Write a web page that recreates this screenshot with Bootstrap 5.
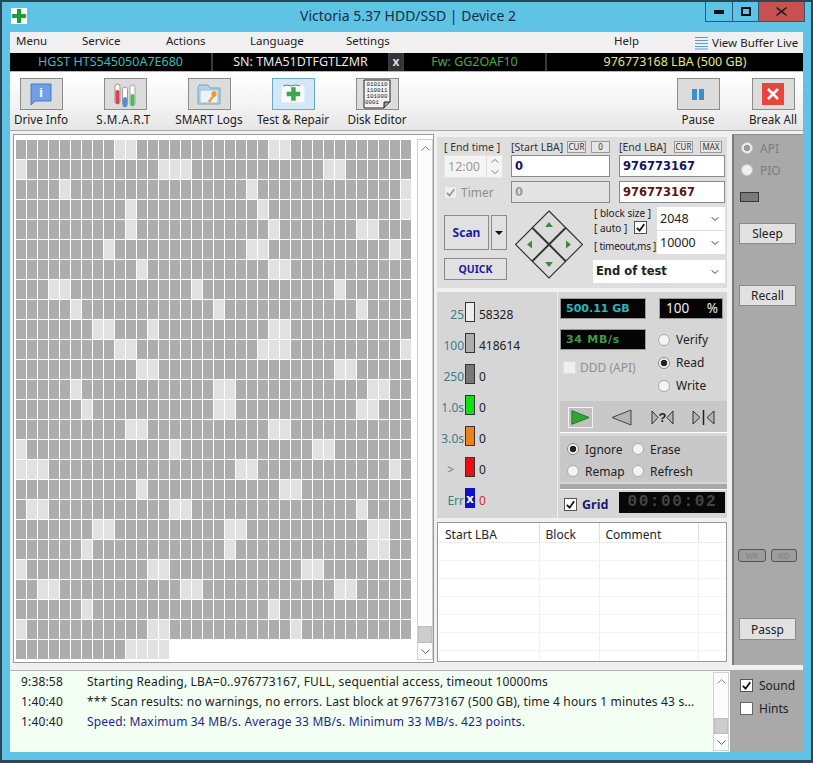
<!doctype html>
<html lang="en">
<head>
<meta charset="utf-8">
<title>Victoria 5.37 HDD/SSD | Device 2</title>
<link href="https://cdn.jsdelivr.net/npm/bootstrap@5.3.0/dist/css/bootstrap.min.css" rel="stylesheet">
<style>
html,body{margin:0;background:#2b4757;}
body{width:813px;height:763px;overflow:hidden;font-family:"Noto Sans",sans-serif;font-size:12px;line-height:15px;color:#222;}
.vw{width:813px;height:763px;background:#5fc3e6;border:2px solid #2b4757;border-bottom-width:3px;}
.vtitle{height:30px;}
.vappicon{width:16px;height:16px;margin:6px 0 0 9px;background:#fff;flex:none;}
.vtitletext{font-size:14px;line-height:28px;text-align:center;color:#14303f;padding-left:84px;}
.vctl{width:100px;height:20px;margin-right:6px;flex:none;}
.vctl>div{border:1px solid #2d5a70;border-top:0;height:20px;display:flex;align-items:center;justify-content:center;}
.vctl .c1{width:28px;}.vctl .c2{width:26px;border-left:0;}.vctl .c3{width:46px;border-left:0;background:#c75050;}
.vbody{margin:0 8px;}
.vmenu{height:21px;background:#f0f0f0;display:grid;grid-template-columns:66px 84px 84px 96px 268px 81px auto;padding-left:6px;line-height:18px;font-size:11.5px;}
.vmenu span{white-space:nowrap;}
.vinfo{height:18px;background:#3a3a3a;display:grid;grid-template-columns:201px 175px 12px 141px 256px;column-gap:2px;line-height:18px;text-align:center;font-size:12.5px;}
.vinfo>div{background:#000;white-space:nowrap;}
.vinfo .vx{background:#333;color:#ddd;font-weight:700;font-size:12px;}
.vtools{height:59px;border-top:1px solid #b8b8b8;background:linear-gradient(#fff,#f5f5f5 50%,#e6e6e6);padding-top:6px;font-size:11.7px;}
.vtool{width:84px;text-align:center;flex:none;white-space:nowrap;}
.vtool:first-child{margin-left:-11px;}
.vtool.w1{width:74px;}.vtool.w2{width:60px;margin-left:8px;}
.vtbtn{width:43px;height:32px;margin:0 auto 2px;background:#dcdcdc;border:1px solid #8c8c8c;display:flex;align-items:center;justify-content:center;}
.vtbtn.on{background:#d3e8f6;border-color:#6aa6cf;}
.vspaced{letter-spacing:.5px;margin-left:-3px;}
.vmain{height:535px;border-top:1px solid #a8a8a8;background:#f0f0f0;padding:3px 0 0 3px;}
.vgridpane{width:421px;height:529px;border:1px solid #999;background:#fff;padding:5px 0 0 2px;flex:none;}
.vcells{display:grid;grid-template-columns:repeat(36,10px);grid-auto-rows:19px;gap:1px;width:401px;align-content:start;}
.vcells i{display:block;background:#adadad;}
.vcells i.l{background:#e1e1e1;}
.vscroll{width:16px;border:1px solid #d0d0d0;background:#fcfcfc;flex:none;}
.vscroll .a{height:16px;display:flex;align-items:center;justify-content:center;flex:none;}
.vscroll .t{background:#cdcdcd;border:1px solid #bdbdbd;flex:none;}
.vsc1{height:521px;margin:-1px 0 0 5px;}
.vsc1 .t{height:17px;}
.vcenter{width:290px;margin-left:3px;flex:none;gap:4px;}
.vtop{height:154px;background:#dedede;border-top:3px solid #f0f0f0;padding:4px 2px 0 7px;font-size:11px;}
.vtopgrid{display:grid;grid-template-columns:59px 100px 106px;column-gap:8px;row-gap:2px;grid-template-rows:12px 24px 22px;}
.vm2{width:99px;}
.vlbl{font-size:10.5px;line-height:13px;white-space:nowrap;color:#333;}
.vmini{border:1px solid #999;font-size:8px;line-height:10px;height:12px;width:19px;text-align:center;color:#333;background:#e6e6e6;}
.vmini.m0{margin-left:5px;}
.vmini.m1{width:22px;margin:0 3px 0 7px;}
.vspacer{flex:1;}
.form-control.vfield{height:22px;padding:0 3px;border:1px solid #8a8a8a;border-radius:0;font-size:11.5px;line-height:20px;font-weight:700;color:#14145a;background:#fff;font-family:"DejaVu Sans",sans-serif;}
.form-control.vfield.vm2{width:99px;}
.form-control.vfield.dis{background:#e4e4e4;color:#9a9a9a;}
.form-control.vfield.red{color:#5a1414;}
.vtime{height:23px;width:59px;background:#f4f4f4;border:1px solid #e4e4e4;display:flex;color:#9a9a9a;font-size:12.5px;line-height:21px;padding-left:3px;}
.vspin{width:16px;margin-left:auto;border-left:1px solid #ddd;display:flex;flex-direction:column;align-items:center;justify-content:space-around;}
.vdim{color:#8f8f8f;}
.vtimer{font-size:12px;height:22px;}
.vbtn.btn{padding:0;border-radius:0;background:#e1e1e1;border:1px solid #8a8a8a;color:#222;font-size:12px;line-height:15px;display:flex;align-items:center;justify-content:center;}
.vscan.btn{width:45px;height:35px;color:#1c1ca0;font-weight:700;}
.vscandrop.btn{width:16px;height:35px;margin-left:2px;}
.vquick.btn{width:63px;height:22px;color:#1c1ca0;font-weight:700;font-size:10.5px;margin-top:8px;}
.vrow3{margin-top:3px;}
.vcol1{width:63px;padding-top:9px;flex:none;}
.vdiamond{width:68px;height:70px;margin:4px 0 0 8px;flex:none;display:block;}
.vcol3{width:132px;margin-left:10px;flex:none;margin-top:1px;}
.vlabels{width:64px;flex:none;font-size:10px;padding-left:1px;}
.vlabels div{white-space:nowrap;line-height:12px;}
.vautorow{height:15px;margin-top:1px;}
.vtoms{margin-top:5px;letter-spacing:-.25px;}
.form-select.vsel{height:23px;width:68px;padding:0 0 0 3px;border:0;border-radius:0;font-size:12.5px;line-height:23px;background-color:#fff;background-size:10px 8px;background-position:right 5px center;color:#222;}
.form-select.vsel.big{width:132px;height:23px;font-weight:700;margin-top:6px;font-family:"DejaVu Sans",sans-serif;font-size:11.5px;}
.form-select.vsel+.form-select.vsel{margin-top:1px;}
.vmid{height:226px;background:#d6d6d6;}
.vstats{width:121px;flex:none;border-right:1px solid #eee;padding-top:10px;gap:11px;}
.vstat{height:20px;display:flex;align-items:flex-end;}
.vstat b{font-weight:400;width:27px;text-align:right;color:#3c7f86;white-space:nowrap;margin-right:1px;}
.vstat b.gt{color:#777;padding-right:10px;}
.vstat u{display:block;width:10px;height:20px;border:1px solid #333;flex:none;margin-right:4px;text-decoration:none;}
.vctrl{width:169px;flex:none;padding-top:6px;padding-left:2px;}
.vlcd{background:#050505;border:1px solid #9a9a9a;font-weight:700;white-space:nowrap;font-family:"DejaVu Sans",sans-serif;}
.vlcd1{width:86px;height:21px;line-height:19px;padding-left:5px;color:#2fb6bb;font-size:11px;}
.vlcd2{width:64px;height:21px;line-height:19px;color:#eee;font-size:13.5px;font-weight:400;font-family:"Noto Sans",sans-serif;margin-left:13px;padding-left:6px;}
.vlcd3{width:86px;height:21px;line-height:19px;padding-left:5px;color:#3f9a45;font-size:11px;letter-spacing:.7px;margin-top:10px;}
.vddd{margin-top:10px;padding-left:3px;height:14px;}
.vopts{width:70px;margin-left:12px;padding-top:9px;}
.vopt{height:23px;display:flex;align-items:center;gap:6px;white-space:nowrap;}
.form-check-input.vrad,.form-check-input.vchk{margin:0;width:13px;height:13px;flex:none;opacity:1;float:none;}
.form-check-input.vrad{width:12px;height:12px;background-color:#f4f4f4;border:1px solid #aaa;}
.form-check-input.vrad:checked{background-color:#f4f4f4;border-color:#888;background-image:radial-gradient(circle,#222 0,#222 3px,transparent 3.6px);}
.form-check-input.vchk{border-radius:0;background-color:#fff;border:1px solid #666;}
.form-check-input.vchk:checked{background-color:#fff;border-color:#555;background-size:11px;background-position:center;background-repeat:no-repeat;background-image:url("data:image/svg+xml,%3Csvg xmlns='http://www.w3.org/2000/svg' viewBox='0 0 12 12'%3E%3Cpath d='M2 6.5 5 9.5 10 2.5' fill='none' stroke='%23111' stroke-width='2'/%3E%3C/svg%3E");}
.form-check-input.vchk.soft,.form-check-input.vchk.soft:checked{border-color:#ddd;background-color:#efefef;}
.form-check-input.vchk:disabled:checked{background-image:url("data:image/svg+xml,%3Csvg xmlns='http://www.w3.org/2000/svg' viewBox='0 0 12 12'%3E%3Cpath d='M2 6.5 5 9.5 10 2.5' fill='none' stroke='%23999' stroke-width='2'/%3E%3C/svg%3E");}
.form-check-input.vchk.vchkauto{margin-right:10px;}
.vplayer{height:32px;background:#c8c8c8;border-bottom:1px solid #fff;margin-top:4px;padding:6px 0 0 8px;gap:16px;}
.vpb{width:25px;height:21px;display:block;flex:none;}
.vplayer .vpb:first-child{background:#c0c0c0;border:1px solid #f4f4f4;}
.vdo{height:46px;background:#c8c8c8;margin-top:3px;padding:2px 0 0 7px;display:grid;grid-template-columns:65px 80px;grid-auto-rows:22px;}
.vdo .vopt{height:22px;}
.vthin{height:5px;background:#a9a9a9;margin-top:2px;}
.vgridrow{height:24px;border-top:1px solid #fff;padding:2px 0 0 4px;display:flex;align-items:flex-start;}
.vgridrow .form-check-input.vchk{margin-top:6px;}
.vgridlbl{font-weight:700;color:#1a1a70;font-size:12.5px;margin:5px 0 0 5px;line-height:15px;}
.vclock{width:106px;height:21px;margin-left:11px;background:#080808;color:#454545;font-family:"Liberation Mono",monospace;font-weight:700;font-size:16px;line-height:21px;text-align:center;letter-spacing:1.6px;}
.vtablewrap{height:140px;border:1px solid #999;background:#fff;overflow:hidden;}
.table.vtab{table-layout:fixed;width:289px;margin:0;font-size:12px;line-height:14px;--bs-table-bg:transparent;}
.table.vtab th{font-weight:400;height:19px;padding:1px 0 0 6px;border-bottom:1px solid #ececec;border-right:1px solid #e0e0e0;white-space:nowrap;}
.table.vtab th:first-child{padding-left:7px;}
.table.vtab td{height:18px;padding:0;border-bottom:1px solid #f2f2f2;border-right:1px solid #f0f0f0;}
.vside{width:71px;height:531px;background:#a9a9a9;border-left:2px solid #7c7c7c;border-top:1px solid #8e8e8e;margin-left:5px;padding:2px 0 0 5px;flex:none;color:#7d7d7d;}
.vside .vopt{height:22px;margin-left:2px;gap:7px;}
.form-check-input.vrad.off{background-color:#f0f0f0;border-color:#c4c4c4;}
.form-check-input.vrad.off:checked{background-image:radial-gradient(circle,#9a9a9a 0,#9a9a9a 3px,transparent 3.6px);}
.vled{width:19px;height:10px;border:1px solid #333;background:#7a7a7a;margin:11px 0 0 1px;}
.vsbtn.btn{width:57px;height:21px;}
.vsbtn.b1{margin-top:21px;}.vsbtn.b2{margin-top:41px;}.vsbtn.b3{margin-top:56px;height:22px;}
.vwr{margin-top:243px;height:13px;margin-left:-1px;gap:5px;}
.vwr>div{border:1px solid #555;background:#9c9c9c;border-radius:3px;color:#8a8a8a;font-size:8px;line-height:11px;text-align:center;font-weight:700;}
.vwr>div:first-child{width:28px;}.vwr>div:last-child{width:26px;}
.vbottom{height:87px;background:#f0f0f0;padding-top:5px;}
.vlog{width:720px;height:82px;background:#f3fff3;border-top:1px solid #b0b0b0;flex:none;}
.vlogtext{flex:1;min-width:0;padding:1px 0 0 11px;font-size:12px;letter-spacing:.17px;}
.vlogrow{display:flex;height:20px;line-height:20px;white-space:nowrap;}
.vlogrow b{font-weight:400;width:66px;flex:none;}
.vblue{color:#1f1f8f;}
.vsc2{height:79px;margin:1px 1px 0 0;}
.vsc2 .t{height:16px;}
.vsnd{width:73px;height:82px;background:#a9a9a9;padding:4px 0 0 10px;color:#222;flex:none;}
.vsnd .vopt{height:23px;gap:6px;}
</style>
</head>
<body>
<div class="vw d-flex flex-column">
  <div class="vtitle d-flex">
    <div class="vappicon d-flex align-items-center justify-content-center">
      <svg width="14" height="14" viewBox="0 0 14 14"><path d="M5 0h4v5h5v4H9v5H5V9H0V5h5z" fill="#1f9d2e"/></svg>
    </div>
    <div class="vtitletext flex-fill">Victoria 5.37 HDD/SSD | Device 2</div>
    <div class="vctl d-flex">
      <div class="c1"><svg width="10" height="4"><rect width="10" height="4" fill="#111"/></svg></div>
      <div class="c2"><svg width="10" height="9"><rect x="1" y="1" width="8" height="7" fill="none" stroke="#111" stroke-width="2"/></svg></div>
      <div class="c3"><svg width="11" height="9" viewBox="0 0 11 9"><path d="M1 0l4.500 3.500L10 0l1 1-4 3.500L11 8l-1 1-4.500-3.500L1 9 0 8l4-3.500L0 1z" fill="#222"/></svg></div>
    </div>
  </div>

  <div class="vbody">
    <div class="vmenu">
      <span>Menu</span><span>Service</span><span>Actions</span><span>Language</span><span>Settings</span><span>Help</span>
      <span class="d-flex align-items-center gap-1"><svg width="13" height="14" viewBox="0 0 13 14"><path d="M0 1.500h13M0 4.500h13M0 7.500h13M0 10.500h13M0 13h13" stroke="#5e9ad6" stroke-width="1.200"/></svg>View Buffer Live</span>
    </div>
    <div class="vinfo">
      <div style="color:#3fb8be">HGST HTS545050A7E680</div>
      <div style="color:#e8e8e8">SN: TMA51DTFGTLZMR</div>
      <div class="vx">x</div>
      <div style="color:#45ad45">Fw: GG2OAF10</div>
      <div style="color:#e4e48a">976773168 LBA (500 GB)</div>
    </div>
    <div class="vtools d-flex">
      <div class="vtool"><div class="vtbtn"><svg width="24" height="24" viewBox="0 0 24 24"><path d="M2 2h20v17H6l-4 4z" fill="#6f9fe6" stroke="#4d78bd"/><text x="12" y="15" font-size="13" font-weight="700" text-anchor="middle" fill="#fff" font-family="Liberation Sans,sans-serif">i</text></svg></div>Drive Info</div>
      <div class="vtool"><div class="vtbtn"><svg width="26" height="27" viewBox="0 0 26 27"><rect x="3" y="3" width="5" height="20" rx="2.500" fill="#fff" stroke="#a88"/><rect x="3.500" y="9" width="4" height="14" rx="2" fill="#d9434a"/><rect x="10.500" y="6" width="5" height="20" rx="2.500" fill="#fff" stroke="#99a"/><rect x="11" y="16" width="4" height="10" rx="2" fill="#4a8fd6"/><rect x="18" y="4" width="5" height="21" rx="2.500" fill="#fff" stroke="#9a9"/><rect x="18.500" y="13" width="4" height="12" rx="2" fill="#54b95a"/></svg></div><span class="vspaced">S.M.A.R.T</span></div>
      <div class="vtool"><div class="vtbtn"><svg width="26" height="24" viewBox="0 0 26 24"><path d="M2 6l1-3h9l2 3h10v16H2z" fill="#b6d3e3" stroke="#7fa3b8"/><rect x="4" y="8" width="18" height="13" fill="#e9f3f8" stroke="#9fc0d2"/><path d="M18 9a3 3 0 0 1 2 5l-3 2-3 5-2-2 4-5a3 3 0 0 1 2-5z" fill="#ee9b2d"/></svg></div>SMART Logs</div>
      <div class="vtool"><div class="vtbtn on"><svg width="30" height="24" viewBox="0 0 30 24"><path d="M3 3h24v18H3z" fill="#f7fbfd" stroke="#d7e4ec"/><path d="M5 4l4-1 4 1 5-1 4 1" fill="none" stroke="#777"/><path d="M13 7h5v5h5v5h-5v5h-5v-5H8v-5h5z" transform="translate(1.500 -1) scale(.9 .9)" fill="#3ba84a"/></svg></div>Test &amp; Repair</div>
      <div class="vtool"><div class="vtbtn"><svg width="30" height="30" viewBox="0 0 30 30"><path d="M2 1h26v22l-6 6H2z" fill="#f2f2f2" stroke="#222"/><path d="M22 29l0-6 6 0" fill="#999" stroke="#222"/><text x="15" y="7" font-size="5.800" text-anchor="middle" fill="#222" font-family="Liberation Mono,monospace">010110</text><text x="15" y="13" font-size="5.800" text-anchor="middle" fill="#222" font-family="Liberation Mono,monospace">110011</text><text x="15" y="19" font-size="5.800" text-anchor="middle" fill="#222" font-family="Liberation Mono,monospace">101000</text><text x="10" y="25" font-size="5.800" text-anchor="middle" fill="#222" font-family="Liberation Mono,monospace">0001</text></svg></div>Disk Editor</div>
      <div class="vtool w1 ms-auto"><div class="vtbtn"><svg width="12" height="11"><rect width="5" height="11" fill="#3a8fd0"/><rect x="7" width="5" height="11" fill="#3a8fd0"/></svg></div>Pause</div>
      <div class="vtool w2"><div class="vtbtn"><svg width="22" height="22" viewBox="0 0 22 22"><rect width="22" height="22" fill="#e8453c"/><path d="M6 6l10 10M16 6L6 16" stroke="#fff" stroke-width="2.500"/></svg></div>Break All</div>
    </div>

    <div class="vmain d-flex">
      <div class="vgridpane d-flex">
        <div class="vcells" id="vcells"></div>
        <div class="vscroll vsc1 d-flex flex-column">
          <div class="a"><svg width="9" height="5"><path d="M.5 4.500l4-4 4 4" fill="none" stroke="#888"/></svg></div>
          <div class="vspacer"></div>
          <div class="t"></div>
          <div class="a"><svg width="9" height="5"><path d="M.5.5l4 4 4-4" fill="none" stroke="#666"/></svg></div>
        </div>
      </div>

      <div class="vcenter d-flex flex-column">
        <div class="vtop">
          <div class="vtopgrid">
            <div class="vlbl">[ End time ]</div>
            <div class="d-flex align-items-center vm2"><span class="vlbl">[Start LBA]</span><span class="vmini ms-auto">CUR</span><span class="vmini m0">0</span></div>
            <div class="d-flex align-items-center"><span class="vlbl">[End LBA]</span><span class="vmini ms-auto">CUR</span><span class="vmini m1">MAX</span></div>
            <div class="vtime">12:00<div class="vspin"><svg width="8" height="4"><path d="M.5 3.500L4 .5l3.500 3" fill="none" stroke="#888"/></svg><svg width="8" height="4"><path d="M.5.5L4 3.500 7.500.5" fill="none" stroke="#888"/></svg></div></div>
            <div class="form-control vfield vm2">0</div>
            <div class="form-control vfield">976773167</div>
            <div class="d-flex align-items-center gap-1 vdim vtimer"><input class="form-check-input vchk soft" type="checkbox" checked disabled aria-label="Timer"><span>Timer</span></div>
            <div class="form-control vfield dis vm2">0</div>
            <div class="form-control vfield red">976773167</div>
          </div>
          <div class="vrow3 d-flex">
            <div class="vcol1">
              <div class="d-flex">
                <button class="btn vbtn vscan" type="button">Scan</button>
                <button class="btn vbtn vscandrop" type="button" aria-label="Scan options"><svg width="8" height="4"><path d="M0 0h8L4 4z" fill="#111"/></svg></button>
              </div>
              <button class="btn vbtn vquick" type="button">QUICK</button>
            </div>
            <svg class="vdiamond" viewBox="0 0 68 70">
              <g fill="#dcdcdc" stroke="#333" stroke-width="1.200">
                <path d="M34 1l16.500 16.500L34 34 17.500 17.500z"/><path d="M17 18l16.500 16.500L17 51 .5 34.500z"/><path d="M51 18l16.500 16.500L51 51 34.500 34.500z"/><path d="M34 35l16.500 16.500L34 68 17.500 51.500z"/>
              </g>
              <g fill="#3d8a3d"><path d="M34 12l4 5h-8z"/><path d="M12 34.500l5-4v8z"/><path d="M56 34.500l-5-4v8z"/><path d="M34 57l4-5h-8z"/></g>
            </svg>
            <div class="vcol3">
              <div class="d-flex">
                <div class="vlabels">
                  <div>[ block size ]</div>
                  <div class="d-flex align-items-center vautorow">[ auto ]<input class="form-check-input vchk vchkauto ms-auto" type="checkbox" checked aria-label="auto"></div>
                  <div class="vtoms">[ timeout,ms ]</div>
                </div>
                <div>
                  <select class="form-select vsel" aria-label="block size"><option>2048</option></select>
                  <select class="form-select vsel" aria-label="timeout"><option>10000</option></select>
                </div>
              </div>
              <select class="form-select vsel big" aria-label="after test"><option>End of test</option></select>
            </div>
          </div>
        </div>

        <div class="vmid d-flex">
          <div class="vstats d-flex flex-column">
            <div class="vstat"><b>25</b><u style="background:#eee"></u>58328</div>
            <div class="vstat"><b>100</b><u style="background:#adadad"></u>418614</div>
            <div class="vstat"><b>250</b><u style="background:#777"></u>0</div>
            <div class="vstat"><b>1.0s</b><u style="background:#12e012"></u>0</div>
            <div class="vstat"><b>3.0s</b><u style="background:#f0801a"></u>0</div>
            <div class="vstat"><b class="gt">&gt;</b><u style="background:#e81010"></u>0</div>
            <div class="vstat"><b>Err</b><u class="d-flex align-items-center justify-content-center" style="background:#1010c8;border-color:#1010c8;color:#fff;font-weight:700;font-size:13px;line-height:20px">x</u><span style="color:#d03030">0</span></div>
          </div>
          <div class="vctrl">
            <div class="d-flex"><div class="vlcd vlcd1">500.11 GB</div><div class="vlcd vlcd2 d-flex justify-content-between"><span>100</span><span class="me-1">%</span></div></div>
            <div class="d-flex">
              <div>
                <div class="vlcd vlcd3">34 MB/s</div>
                <div class="d-flex align-items-center gap-1 vddd vdim"><input class="form-check-input vchk soft" type="checkbox" disabled aria-label="DDD (API)"><span>DDD (API)</span></div>
              </div>
              <div class="vopts">
                <div class="vopt"><input class="form-check-input vrad" type="radio" name="vm" aria-label="Verify">Verify</div>
                <div class="vopt"><input class="form-check-input vrad" type="radio" name="vm" checked aria-label="Read">Read</div>
                <div class="vopt"><input class="form-check-input vrad" type="radio" name="vm" aria-label="Write">Write</div>
              </div>
            </div>
            <div class="vplayer d-flex">
              <svg class="vpb" viewBox="0 0 25 21"><path d="M3 3l19 7.500L3 18z" fill="#2fa82f" stroke="#1d6b1d"/></svg>
              <svg class="vpb" viewBox="0 0 25 21"><path d="M3 10.500L22 3v15z" fill="#b4b4b4" stroke="#444"/></svg>
              <svg class="vpb" viewBox="0 0 25 21"><path d="M2 4l6 6.500L2 17zM23 4l-6 6.500L23 17z" fill="#b4b4b4" stroke="#333"/><text x="12.500" y="15" font-size="13" font-weight="700" text-anchor="middle" fill="#222" font-family="Liberation Sans,sans-serif">?</text></svg>
              <svg class="vpb" viewBox="0 0 25 21"><path d="M2 4l7 6.500L2 17zM23 4l-7 6.500L23 17z" fill="#b4b4b4" stroke="#333"/><path d="M12.500 3v15" stroke="#222" stroke-width="1.500"/></svg>
            </div>
            <div class="vdo">
              <div class="vopt"><input class="form-check-input vrad" type="radio" name="ve" checked aria-label="Ignore">Ignore</div>
              <div class="vopt"><input class="form-check-input vrad" type="radio" name="ve" aria-label="Erase">Erase</div>
              <div class="vopt"><input class="form-check-input vrad" type="radio" name="ve" aria-label="Remap">Remap</div>
              <div class="vopt"><input class="form-check-input vrad" type="radio" name="ve" aria-label="Refresh">Refresh</div>
            </div>
            <div class="vthin"></div>
            <div class="vgridrow"><input class="form-check-input vchk" type="checkbox" checked aria-label="Grid"><span class="vgridlbl">Grid</span><div class="vclock">00:00:02</div></div>
          </div>
        </div>

        <div class="vtablewrap">
          <table class="table vtab">
            <colgroup><col style="width:101px"><col style="width:60px"><col style="width:99px"><col></colgroup>
            <thead><tr><th>Start LBA</th><th>Block</th><th>Comment</th><th></th></tr></thead>
            <tbody><tr><td></td><td></td><td></td><td></td></tr><tr><td></td><td></td><td></td><td></td></tr><tr><td></td><td></td><td></td><td></td></tr><tr><td></td><td></td><td></td><td></td></tr><tr><td></td><td></td><td></td><td></td></tr><tr><td></td><td></td><td></td><td></td></tr><tr><td></td><td></td><td></td><td></td></tr></tbody>
          </table>
        </div>
      </div>

      <div class="vside">
        <div class="vopt"><input class="form-check-input vrad off" type="radio" name="vp" checked aria-label="API">API</div>
        <div class="vopt"><input class="form-check-input vrad off" type="radio" name="vp" aria-label="PIO">PIO</div>
        <div class="vled"></div>
        <button class="btn vbtn vsbtn b1" type="button">Sleep</button>
        <button class="btn vbtn vsbtn b2" type="button">Recall</button>
        <div class="vwr d-flex"><div>WR</div><div>RD</div></div>
        <button class="btn vbtn vsbtn b3" type="button">Passp</button>
      </div>
    </div>

    <div class="vbottom d-flex">
      <div class="vlog d-flex">
        <div class="vlogtext">
          <div class="vlogrow"><b>9:38:58</b><span>Starting Reading, LBA=0..976773167, FULL, sequential access, timeout 10000ms</span></div>
          <div class="vlogrow"><b>1:40:40</b><span>*** Scan results: no warnings, no errors. Last block at 976773167 (500 GB), time 4 hours 1 minutes 43 s...</span></div>
          <div class="vlogrow"><b>1:40:40</b><span class="vblue">Speed: Maximum 34 MB/s. Average 33 MB/s. Minimum 33 MB/s. 423 points.</span></div>
        </div>
        <div class="vscroll vsc2 d-flex flex-column">
          <div class="a"><svg width="9" height="5"><path d="M.5 4.500l4-4 4 4" fill="none" stroke="#888"/></svg></div>
          <div class="vspacer"></div>
          <div class="t"></div>
          <div class="a"><svg width="9" height="5"><path d="M.5.5l4 4 4-4" fill="none" stroke="#666"/></svg></div>
        </div>
      </div>
      <div class="vsnd">
        <div class="vopt"><input class="form-check-input vchk" type="checkbox" checked aria-label="Sound">Sound</div>
        <div class="vopt"><input class="form-check-input vchk" type="checkbox" aria-label="Hints">Hints</div>
      </div>
    </div>
  </div>
</div>
<script>
const lights={0:[9,10,23,24],1:[0,13,14,15,28,29],2:[4,21,35],3:[10,22,35],4:[10,23,31,32],5:[8,21,22,34],6:[11,23,24],7:[3,4,16,29],8:[5,18,31],9:[7,8,12,23,24],10:[9,10,22,23,24,35],11:[11,12,29,30],12:[5,18,19,32,33],13:[6,18,19,31,32],14:[10,11,23,24],15:[0,14,27,28],16:[0,1,2,20,21,34],17:[11,24,25],18:[1,2,14,15,31],19:[7,8,19,20,32,33],20:[6,19,32,33],21:[0,12,13,26,27],22:[2,3,15,16,29,30],23:[6,23],24:[0,12,13,25],25:[10,11,12,13]};
const g=document.getElementById('vcells');let h='';
for(let r=0;r<26;r++){const n=r===25?14:36;for(let c=0;c<n;c++){h+='<i'+(lights[r].includes(c)?' class="l"':'')+'></i>';}}
g.innerHTML=h;
</script>
<script src="https://cdn.jsdelivr.net/npm/bootstrap@5.3.0/dist/js/bootstrap.bundle.min.js"></script>
</body>
</html>
